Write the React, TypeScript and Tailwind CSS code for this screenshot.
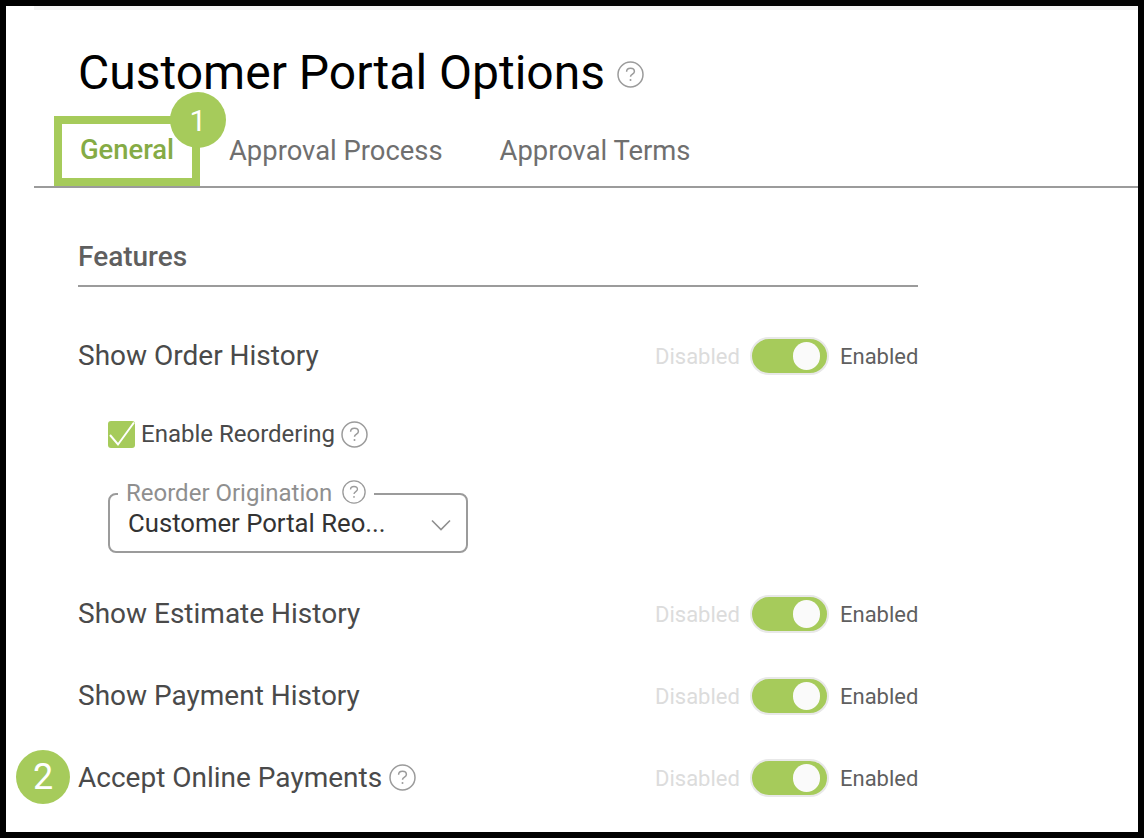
import React from 'react';

const HelpIcon = ({ size = 27, className = '' }: { size?: number; className?: string }) => (
  <svg width={size} height={size} viewBox="0 0 27 27" fill="none" className={`shrink-0 ${className}`}>
    <circle cx="13.5" cy="13.5" r="12.5" stroke="#9b9b9b" strokeWidth="1.5" />
    <path d="M9.6 10.8c0-2 1.6-3.5 3.9-3.5s3.9 1.4 3.9 3.2c0 2.6-3.9 2.5-3.9 5.3" stroke="#9b9b9b" strokeWidth="1.5" />
    <circle cx="13.5" cy="19" r="1" fill="#9b9b9b" />
  </svg>
);

const Toggle = () => (
  <div className="flex items-center text-[22px] w-[263px]">
    <span className="text-[#dcdcdc] w-[95px] shrink-0">Disabled</span>
    <div className="relative w-[79px] h-[38px] rounded-full bg-[#a6cb5b] border-2 border-[#e8e8e8] shrink-0">
      <div className="absolute right-[7px] top-[3px] w-[27px] h-[28px] rounded-full bg-[#fafafa]" />
    </div>
    <span className="text-[#5f5f5f] ml-[11px]">Enabled</span>
  </div>
);

const Row = ({ label, help, className }: { label: string; help?: boolean; className: string }) => (
  <div className={`flex items-center justify-between w-[840px] ${className}`}>
    <div className="flex items-center gap-[7px]">
      <span className="text-[28px] leading-[38px] text-[#4a4a4a]">{label}</span>
      {help && <HelpIcon className="-mt-[2px]" />}
    </div>
    <Toggle />
  </div>
);

export default function App() {
  return (
    <div className="w-[1144px] h-[838px] border-[6px] border-black bg-white overflow-hidden font-['Roboto',sans-serif]">
      <div className="ml-[28px] h-[4px] bg-[#f2f2f2]" />
      <div className="pl-[72px] pt-[28px] flex items-center gap-[12px]">
        <h1 className="text-[48px] leading-[70px] text-black font-normal">Customer Portal Options</h1>
        <HelpIcon className="mt-[2px]" />
      </div>

      {/* Tabs */}
      <div className="ml-[28px] h-[84px] -mt-[4px] border-b-2 border-[#9b9b9b] flex items-end text-[27.4px] text-[#6f6f6f]">
        <div className="relative ml-[20px] w-[146px] h-[70px] border-[8px] border-[#a6cb5b] flex items-center justify-center text-[#85ab45] font-medium">
          General
          <div className="absolute -right-[34px] -top-[32px] w-[56px] h-[56px] rounded-full bg-[#a6cb5b] text-white text-[30px] flex items-center justify-center font-normal">1</div>
        </div>
        <span className="ml-[29px] h-[55px]">Approval Process</span>
        <span className="ml-[57px] h-[55px]">Approval Terms</span>
      </div>

      <div className="pl-[72px]">
        <div className="w-[840px] mt-[48px] h-[51px] border-b-2 border-[#9b9b9b] text-[28px] font-medium text-[#5f5f5f] leading-[42px]">
          Features
        </div>

        <Row label="Show Order History" className="mt-[50px]" />

        <div className="ml-[30px] mt-[41px] flex items-center">
          <div className="w-[27px] h-[27px] rounded-[3px] bg-[#a6cb5b] flex items-center justify-center">
            <svg width="27" height="27" viewBox="0 0 27 27" fill="none">
              <path d="M2 14l8 9.5L26 1.5" stroke="white" strokeWidth="2" />
            </svg>
          </div>
          <span className="ml-[6px] mr-[6px] text-[24px] text-[#4a4a4a]">Enable Reordering</span>
          <HelpIcon />
        </div>

        {/* Select with notched label */}
        <div className="relative ml-[30px] mt-[41px] w-[360px] h-[60px] border-2 border-[#9b9b9b] rounded-[8px] flex items-center justify-between pl-[18px] pr-[15px]">
          <div className="absolute left-[8px] -top-[20px] bg-white px-[8px] flex items-center gap-[10px] text-[24px] text-[#8f8f8f]">
            Reorder Origination
            <HelpIcon size={24} className="-mt-[3px]" />
          </div>
          <span className="text-[25.7px] text-[#333]">Customer Portal Reo...</span>
          <svg width="20" height="12" viewBox="0 0 20 12" fill="none" className="mt-[4px]">
            <path d="M1 1.5l9 9 9-9" stroke="#8f8f8f" strokeWidth="1.6" />
          </svg>
        </div>

        <Row label="Show Estimate History" className="mt-[42px]" />
        <Row label="Show Payment History" className="mt-[44px]" />
        <div className="relative">
          <div className="absolute -left-[62px] top-[35px] w-[54px] h-[54px] rounded-full bg-[#a6cb5b] text-white text-[36px] flex items-center justify-center">2</div>
          <Row label="Accept Online Payments" help className="pt-[44px]" />
        </div>
      </div>
    </div>
  );
}
